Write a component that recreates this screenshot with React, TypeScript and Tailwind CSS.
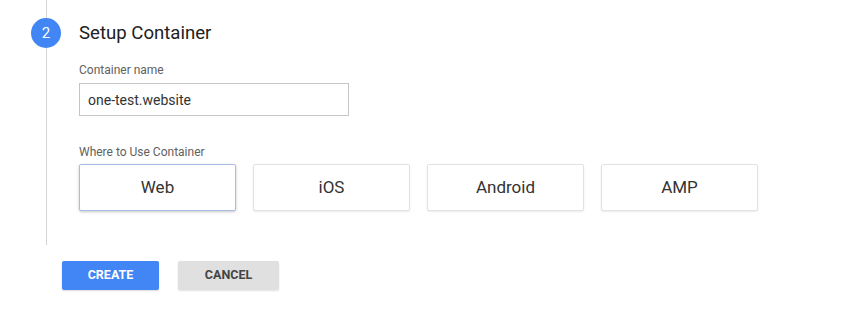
export default function App() {
  const targets = ['Web', 'iOS', 'Android', 'AMP'];
  const selected = 'Web';

  return (
    <div className="w-[866px] h-[314px] bg-white font-['Roboto','Liberation_Sans',sans-serif]">
      {/* Step 2 */}
      <div className="flex h-[245px] pl-[31px]">
        <div className="flex w-[30px] flex-col items-center">
          <div className="h-[18px] w-px bg-[#d6d6d6]" />
          <div className="flex h-[30px] w-[30px] items-center justify-center rounded-full bg-[#4285f4] text-[15px] text-white">
            2
          </div>
          <div className="w-px flex-1 bg-[#d6d6d6]" />
        </div>

        <div className="ml-[18px] pt-[21px]">
          <h2 className="text-[18.6px] leading-6 text-[#212121]">Setup Container</h2>

          <label className="mt-[17px] block text-xs leading-4 text-[#616161]">Container name</label>
          <input
            defaultValue="one-test.website"
            className="mt-[5px] h-[33px] w-[270px] border border-[#c6c6c6] px-[8px] text-[14px] text-[#333] outline-none"
          />

          <div className="mt-[28px] text-xs leading-4 text-[#616161]">Where to Use Container</div>
          <div className="mt-[4px] flex gap-[17px]">
            {targets.map((t) => (
              <button
                key={t}
                className={
                  t === selected
                    ? 'h-[47px] w-[157px] rounded-[2px] border border-[#a9bde4] bg-white text-[17px] text-[#333] shadow-[0_1px_3px_rgba(0,0,0,0.22)]'
                    : 'h-[47px] w-[157px] rounded-[2px] border border-[#e2e2e2] bg-white text-[17px] text-[#333] shadow-[0_1px_2px_rgba(0,0,0,0.08)]'
                }
              >
                {t}
              </button>
            ))}
          </div>
        </div>
      </div>

      {/* Actions */}
      <div className="flex gap-[19px] pl-[62px] pt-[16px]">
        <button className="h-[29px] w-[97px] rounded-[2px] bg-[#4285f4] text-[12.5px] font-bold text-white shadow-[0_1px_2px_rgba(0,0,0,0.15)]">
          CREATE
        </button>
        <button className="h-[29px] w-[101px] rounded-[2px] bg-[#e0e0e0] text-[12.5px] font-bold text-[#444] shadow-[0_1px_2px_rgba(0,0,0,0.12)]">
          CANCEL
        </button>
      </div>
    </div>
  );
}
